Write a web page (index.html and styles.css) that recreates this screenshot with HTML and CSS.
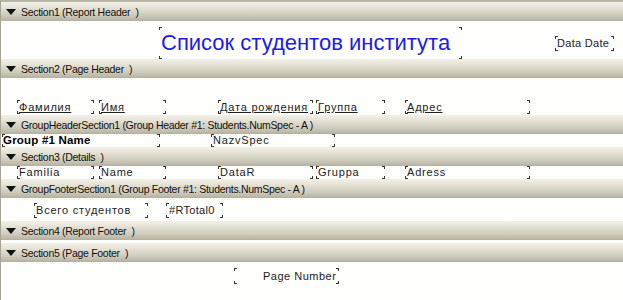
FILE: index.html
```html
<!DOCTYPE html>
<html lang="ru">
<head>
    <meta charset="UTF-8">
    <title>Report Designer</title>
    <link rel="stylesheet" href="styles.css">
</head>
<body>
    <div class="designer">
        <div class="band first"><span class="tri"></span>Section1 (Report Header&nbsp; )</div>
        <div class="area a1">
            <div class="fld title">Список студентов института</div>
            <div class="fld date">Data Date</div>
        </div>

        <div class="band"><span class="tri"></span>Section2 (Page Header&nbsp; )</div>
        <div class="area a2">
            <div class="fld head c1">Фамилия</div>
            <div class="fld head c2">Имя</div>
            <div class="fld head c3">Дата рождения</div>
            <div class="fld head c4">Группа</div>
            <div class="fld head c5">Адрес</div>
        </div>

        <div class="band"><span class="tri"></span>GroupHeaderSection1 (Group Header #1: Students.NumSpec - A )</div>
        <div class="area a3">
            <div class="fld group">Group #1 Name</div>
            <div class="fld spec">NazvSpec</div>
        </div>

        <div class="band"><span class="tri"></span>Section3 (Details&nbsp; )</div>
        <div class="area a4">
            <div class="fld row c1">Familia</div>
            <div class="fld row c2">Name</div>
            <div class="fld row c3">DataR</div>
            <div class="fld row c4">Gruppa</div>
            <div class="fld row c5">Adress</div>
        </div>

        <div class="band"><span class="tri"></span>GroupFooterSection1 (Group Footer #1: Students.NumSpec - A )</div>
        <div class="area a5">
            <div class="fld total-label">Всего студентов</div>
            <div class="fld total">#RTotal0</div>
        </div>

        <div class="band"><span class="tri"></span>Section4 (Report Footer&nbsp; )</div>
        <div class="area a6"></div>

        <div class="band"><span class="tri"></span>Section5 (Page Footer&nbsp; )</div>
        <div class="area a7">
            <div class="fld page">Page Number</div>
        </div>
    </div>
</body>
</html>
```

FILE: styles.css
```css
body {
    margin: 0;
    font-family: "Liberation Sans", Arial, sans-serif;
    background-color: #ffffff;
    overflow: hidden;
}
.designer {
    width: 623px;
    height: 300px;
    border-left: 1px solid #a7a496;
    box-sizing: border-box;
    background-color: #fefefc;
}
.band {
    height: 19px;
    display: flex;
    align-items: center;
    font-size: 10.5px;
    letter-spacing: -0.3px;
    color: #111;
    background: linear-gradient(#f3f1e8, #e2dfd2 35%, #cfcbbb 70%, #b4af9e);
    white-space: nowrap;
}
.band.first {
    border-top: 2px solid #b9b5a6;
}
.tri {
    width: 0;
    height: 0;
    margin: 0 5px 0 5px;
    border-left: 5px solid transparent;
    border-right: 5px solid transparent;
    border-top: 6px solid #111;
}
.area {
    position: relative;
}
.a1 { height: 38px; }
.a2 { height: 37px; }
.a3 { height: 13px; }
.a4 { height: 13px; }
.a5 { height: 23px; }
.a6 { height: 3px; }
.a7 { height: 38px; }

/* field with corner marks */
.fld {
    position: absolute;
    box-sizing: border-box;
    padding-left: 2px;
    font-size: 11px;
    letter-spacing: 0.8px;
    color: #222;
    white-space: nowrap;
    overflow: hidden;
    background:
        linear-gradient(#333, #333) left top / 1px 3px no-repeat,
        linear-gradient(#333, #333) left top / 3px 1px no-repeat,
        linear-gradient(#333, #333) right top / 1px 3px no-repeat,
        linear-gradient(#333, #333) right top / 3px 1px no-repeat,
        linear-gradient(#333, #333) left bottom / 1px 3px no-repeat,
        linear-gradient(#333, #333) left bottom / 3px 1px no-repeat,
        linear-gradient(#333, #333) right bottom / 1px 3px no-repeat,
        linear-gradient(#333, #333) right bottom / 3px 1px no-repeat;
}
.title {
    left: 158px;
    top: 6px;
    width: 303px;
    height: 32px;
    padding-top: 3px;
    font-size: 22px;
    letter-spacing: 0;
    color: #1c1ce6;
}
.date {
    left: 554px;
    top: 15px;
    width: 59px;
    height: 15px;
    padding-top: 1px;
    letter-spacing: 0.3px;
}
.head {
    top: 22px;
    height: 14px;
    padding-top: 1px;
    text-decoration: underline;
}
.row {
    top: 0;
    height: 13px;
}
.c1 { left: 16px; width: 77px; }
.c2 { left: 98px; width: 67px; }
.c3 { left: 217px; width: 95px; }
.c4 { left: 315px; width: 69px; }
.c5 { left: 404px; width: 125px; }
.group {
    left: 1px;
    top: 0;
    width: 158px;
    height: 13px;
    padding-left: 1px;
    font-weight: bold;
    font-size: 11.5px;
    letter-spacing: 0.2px;
    color: #000;
}
.spec {
    left: 210px;
    top: 0;
    width: 124px;
    height: 13px;
}
.total-label {
    left: 33px;
    top: 5px;
    width: 114px;
    height: 15px;
    padding-top: 1px;
}
.total {
    left: 165px;
    top: 5px;
    width: 57px;
    height: 15px;
    padding-top: 1px;
    padding-left: 3px;
    letter-spacing: 0.3px;
}
.page {
    left: 233px;
    top: 6px;
    width: 105px;
    height: 16px;
    padding-top: 2px;
    padding-left: 29px;
    letter-spacing: 0.5px;
}
```
